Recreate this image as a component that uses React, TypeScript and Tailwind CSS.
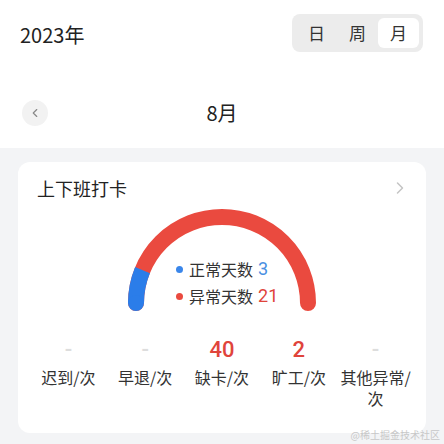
import { ChevronLeft, ChevronRight } from 'lucide-react';

const font = { fontFamily: '"Noto Sans CJK SC", "Noto Sans", sans-serif' };

const stats = [
  { label: ['迟到/次'], value: null },
  { label: ['早退/次'], value: null },
  { label: ['缺卡/次'], value: '40' },
  { label: ['旷工/次'], value: '2' },
  { label: ['其他异常/', '次'], value: null },
];

// semicircle gauge: center (100, 98), r = 86
function Gauge() {
  const r = 86;
  const cx = 100;
  const cy = 98;
  const normal = 3;
  const total = 24;
  const a = Math.PI - (normal / total) * Math.PI;
  const bx = cx + r * Math.cos(a);
  const by = cy - r * Math.sin(a);
  return (
    <svg width="200" height="112" viewBox="0 0 200 112">
      <path
        d={`M ${cx - r} ${cy} A ${r} ${r} 0 0 1 ${cx + r} ${cy}`}
        fill="none"
        stroke="#ea4a3f"
        strokeWidth="16"
        strokeLinecap="round"
      />
      <path
        d={`M ${cx - r} ${cy} A ${r} ${r} 0 0 1 ${bx} ${by}`}
        fill="none"
        stroke="#2b7de9"
        strokeWidth="16"
        strokeLinecap="butt"
      />
      <circle cx={cx - r} cy={cy} r="8" fill="#2b7de9" />
    </svg>
  );
}

export default function App() {
  return (
    <div className="relative w-[444px] h-[444px] overflow-hidden bg-white text-[#222]" style={font}>
      {/* year + range switch */}
      <div className="flex items-start justify-between pl-5 pr-[21px] pt-[14px]">
        <div className="mt-[7px] text-[20px] leading-[28px]">2023年</div>
        <div className="flex rounded-lg bg-[#ececec] p-[4px]">
          {['日', '周', '月'].map((t) => (
            <div
              key={t}
              className={`flex h-[30px] w-[41px] items-center justify-center rounded-md text-[17px] text-[#333] ${
                t === '月' ? 'bg-white' : ''
              }`}
            >
              {t}
            </div>
          ))}
        </div>
      </div>

      {/* month switch */}
      <div className="relative mt-[48px] flex h-[26px] items-center justify-center">
        <div className="absolute left-[22px] flex h-[26px] w-[26px] items-center justify-center rounded-full bg-[#f2f2f2]">
          <ChevronLeft size={14} className="text-[#888]" strokeWidth={2} />
        </div>
        <div className="text-[20px] leading-[28px]">8月</div>
      </div>

      {/* gray area */}
      <div className="mt-[22px] h-[300px] bg-[#f3f4f6] px-[18px] pt-[14px]">
        <div className="rounded-xl bg-white pt-[14px] pb-[24px]">
          <div className="flex h-[24px] items-center justify-between pl-[19px] pr-[16px]">
            <div className="text-[18px] leading-[24px]">上下班打卡</div>
            <ChevronRight size={20} className="text-[#c4c4c4]" strokeWidth={1.8} />
          </div>

          <div className="mt-[5px] flex justify-center">
            <div className="relative">
              <Gauge />
              <div className="absolute left-[54px] top-[52px] flex flex-col gap-[3px] text-[16px] leading-[24px] text-[#333]">
                <div className="flex items-center">
                  <span className="mr-[6px] h-[7px] w-[7px] rounded-full bg-[#3a86ea]" />
                  正常天数
                  <span className="ml-[5px] text-[18px] text-[#4a90e2]" style={{ fontFamily: 'Roboto, sans-serif' }}>3</span>
                </div>
                <div className="flex items-center">
                  <span className="mr-[6px] h-[7px] w-[7px] rounded-full bg-[#ea4a3f]" />
                  异常天数
                  <span className="ml-[5px] text-[18px] text-[#e0443b]" style={{ fontFamily: 'Roboto, sans-serif' }}>21</span>
                </div>
              </div>
            </div>
          </div>

          <div className="mt-[19px] grid grid-cols-5 px-[12px]">
            {stats.map((s) => (
              <div key={s.label[0]} className="flex flex-col items-center text-center">
                <div
                  className={`h-[28px] text-[22px] font-medium leading-[28px] ${s.value ? 'text-[#e0443b]' : 'text-[#ddd]'}`}
                  style={{ fontFamily: 'Roboto, sans-serif' }}
                >
                  {s.value ?? '-'}
                </div>
                <p className="mt-[3px] whitespace-pre text-[16px] leading-[21px] text-[#333]">{s.label.join('\n')}</p>
              </div>
            ))}
          </div>
        </div>
      </div>

      <div className="absolute bottom-[2px] right-[4px] text-[10px] text-[#c8c8c8]">@稀土掘金技术社区</div>
    </div>
  );
}
